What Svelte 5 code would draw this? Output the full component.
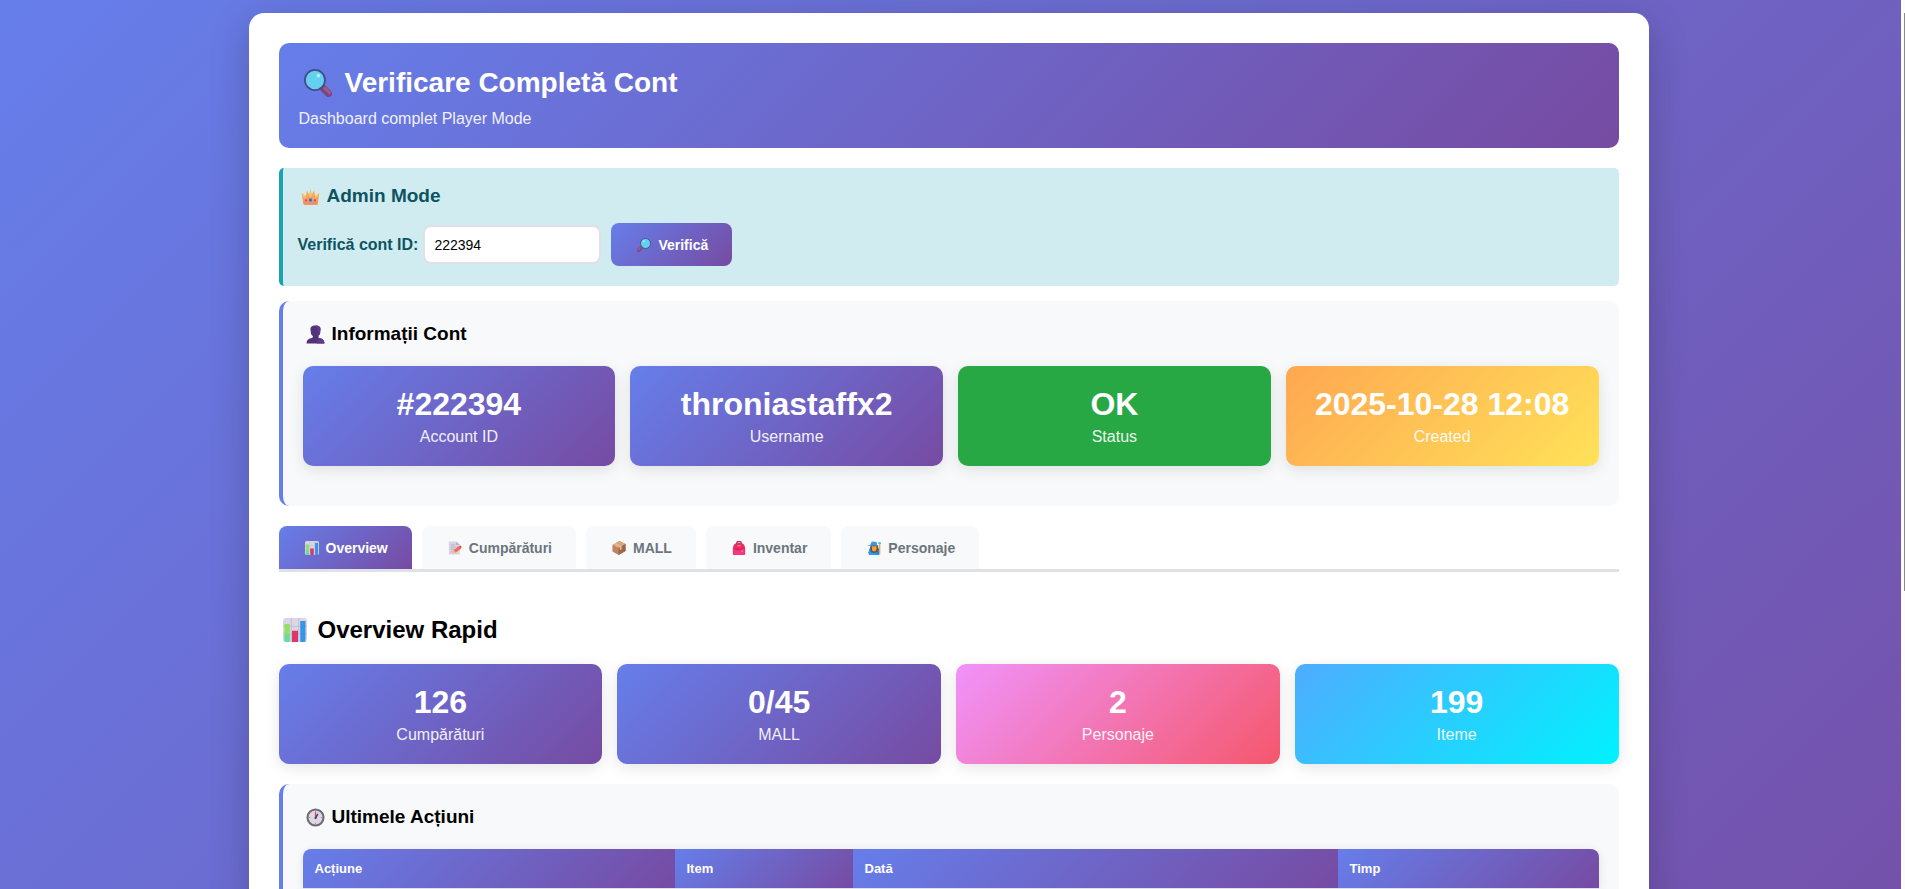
<script>
  let accountId = $state('222394');
  let active = $state('Overview');

  const account = [
    { value: '#222394', label: 'Account ID', tone: 'violet' },
    { value: 'throniastaffx2', label: 'Username', tone: 'violet' },
    { value: 'OK', label: 'Status', tone: 'green' },
    { value: '2025-10-28 12:08', label: 'Created', tone: 'amber' }
  ];
  const overview = [
    { value: '126', label: 'Cumpărături', tone: 'violet' },
    { value: '0/45', label: 'MALL', tone: 'violet' },
    { value: '2', label: 'Personaje', tone: 'pink' },
    { value: '199', label: 'Iteme', tone: 'cyan' }
  ];
  const tabs = [
    { name: 'Overview', icon: 'chart' },
    { name: 'Cumpărături', icon: 'memo' },
    { name: 'MALL', icon: 'box' },
    { name: 'Inventar', icon: 'bag' },
    { name: 'Personaje', icon: 'hero' }
  ];
</script>

{#snippet icon(name)}
  <svg class="icon" viewBox="0 0 32 32" aria-hidden="true">
    {#if name === 'lens'}
      <path d="M22 22l6 6" stroke="#7a4680" stroke-width="8" stroke-linecap="round" />
      <path d="M24 22l5 5" stroke="#9c5a86" stroke-width="4" stroke-linecap="round" />
      <circle cx="12.500" cy="12.500" r="11.500" fill="#62d0ee" stroke="#464a8a" stroke-width="2" />
      <circle cx="16.500" cy="7.500" r="2.200" fill="#b4ecfa" />
    {:else if name === 'crown'}
      <path d="M4 29L1 10l7 5 2-9 4 7 2-10 2 10 4-7 2 9 7-5-3 19z" fill="#f5ab5e" />
      <path d="M4 16h24l1 6-1 8H5L3 22z" fill="#f3a160" />
      <path d="M4 24h24l-1 6H5z" fill="#ee9166" />
      <path d="M3 13l5 5M29 13l-5 5M16 7v10" stroke="#ffc95f" stroke-width="2.500" />
      <circle cx="16" cy="22" r="3" fill="#2d75e8" />
      <circle cx="8.500" cy="22.500" r="1.900" fill="#e83a68" />
      <circle cx="23.500" cy="22.500" r="1.900" fill="#e83a68" />
    {:else if name === 'person'}
      <path d="M1 31c0-6 4-8 9-9 2-1 2-3 1-4C8 16 8 13 8 10 6 4 10 1 16 1s10 3 8 9c0 3 0 6-3 8-1 1-1 3 1 4 5 1 9 3 9 9z" fill="#533378" />
      <path d="M16 1c6 0 10 3 8 9 0 3 0 6-3 8-1 1-1 3 1 4 5 1 9 3 9 9H18c6-9 4-20-2-30z" fill="#5e3b87" />
    {:else if name === 'chart'}
      <rect x="0" y="0" width="32" height="32" rx="4" fill="#dcd6e4" />
      <path d="M0 11h32M0 21h32M11 0v32M21 0v32" stroke="#bdb5ca" />
      <path d="M2 8h7v24H4q-2 0-2-2z" fill="#8fe065" />
      <path d="M2 22h7v10H4q-2 0-2-2z" fill="#66dda0" />
      <rect x="12" y="17" width="8" height="15" fill="#e0346f" />
      <path d="M23 4h7v26q0 2-2 2h-5z" fill="#3396e8" />
    {:else if name === 'memo'}
      <path d="M2 1h17l8 8v22H2z" fill="#dbd3e3" />
      <path d="M19 1v8h8z" fill="#b9aec8" />
      <path d="M6 9h10M6 14h17M6 19h14M6 25h9" stroke="#a99fbb" stroke-width="1.500" />
      <path d="M11 28l2-7 12-9 5 5-12 9z" fill="#f06d45" />
      <path d="M25 12l3-2q3 1 3 5l-2 2z" fill="#dc4068" />
      <path d="M11 28l2-7 5 5z" fill="#f8c893" />
    {:else if name === 'box'}
      <path d="M1 9L17 0l14 7v16l-16 9L1 24z" fill="#bd8562" />
      <path d="M1 9L17 0l14 7-16 9z" fill="#d9a57c" />
      <path d="M15 16l16-9v16l-16 9z" fill="#9b6650" />
      <path d="M8 5l14 7v7l-4 2v-7L5 7z" fill="#e8bd8b" />
    {:else if name === 'bag'}
      <path d="M11 7V4q0-3 5-3t5 3v3" fill="none" stroke="#a62958" stroke-width="3" />
      <path d="M2 29V16Q3 4 16 4t14 12v13q0 3-3 3H5q-3 0-3-3z" fill="#e92a66" />
      <path d="M4 19h24v10q0 3-3 3H7q-3 0-3-3z" fill="#ff347f" />
      <path d="M7 20h18" stroke="#a72559" stroke-width="2" />
      <path d="M12 11h8M23 20v5" stroke="#f9b552" stroke-width="2" />
    {:else if name === 'hero'}
      <path d="M5 32V20l4-10h15l4 10v12z" fill="#237ed4" />
      <path d="M8 12q0-4 9-4t8 4v7q-2 8-8 8t-9-8z" fill="#704739" />
      <path d="M11 12h11v6q-1 6-6 6-4 0-5-6z" fill="#f2a13e" />
      <path d="M1 12q3-3 6-3l4-8 11 1 1 7 5 3q-13-4-27 0z" fill="#369ce9" />
      <path d="M2 24l9 2 5 2 6-2 5 6H5z" fill="#299be6" />
      <path d="M29 8v22" stroke="#f2a642" stroke-width="3" />
      <circle cx="29" cy="5" r="3" fill="#46bcef" />
    {:else if name === 'clock'}
      <circle cx="16" cy="16" r="13.500" fill="#dcd7e0" stroke="#706a76" stroke-width="3.500" />
      <path d="M16 5v2M16 25v2M5 16h2M25 16h2" stroke="#918998" stroke-width="1.500" />
      <path d="M16 17V7" stroke="#e5395d" stroke-width="2" />
      <path d="M16 17l4-7" stroke="#4d3974" stroke-width="2.500" />
      <circle cx="16" cy="17" r="1.800" fill="#4d3974" />
    {/if}
  </svg>
{/snippet}

{#snippet cards(items)}
  <div class="cards">
    {#each items as item}
      <div class="stat {item.tone}">
        <div class="value">{item.value}</div>
        <div class="label">{item.label}</div>
      </div>
    {/each}
  </div>
{/snippet}

<div class="page">
  <div class="view">
    <main class="container">
      <header class="hero violet">
        <h1>{@render icon('lens')}Verificare Completă Cont</h1>
        <p>Dashboard complet Player Mode</p>
      </header>

      <form class="admin" onsubmit={(e) => e.preventDefault()}>
        <h3>{@render icon('crown')}Admin Mode</h3>
        <div class="lookup">
          <label for="account">Verifică cont ID:</label>
          <input id="account" type="text" bind:value={accountId} />
          <button class="check violet" type="submit"><span class="flip">{@render icon('lens')}</span>Verifică</button>
        </div>
      </form>

      <section class="panel info">
        <h3>{@render icon('person')}Informații Cont</h3>
        {@render cards(account)}
      </section>

      <nav class="tabs">
        {#each tabs as tab}
          <button class="tab" class:violet={active === tab.name} onclick={() => (active = tab.name)}>
            {@render icon(tab.icon)}{tab.name}
          </button>
        {/each}
      </nav>

      <h2>{@render icon('chart')}Overview Rapid</h2>
      {@render cards(overview)}

      <section class="panel recent">
        <h3>{@render icon('clock')}Ultimele Acțiuni</h3>
        <table>
          <colgroup>
            <col class="c1" /><col class="c2" /><col class="c3" /><col class="c4" />
          </colgroup>
          <thead>
            <tr><th>Acțiune</th><th>Item</th><th>Dată</th><th>Timp</th></tr>
          </thead>
        </table>
      </section>
    </main>
  </div>
  <div class="scroll"><div class="thumb"></div></div>
</div>

<style>
  :global(body) {
    margin: 0;
    font-family: 'Liberation Sans', Arial, sans-serif;
    font-size: 16px;
    line-height: 18px;
    color: #000;
  }
  * {
    box-sizing: border-box;
  }
  h1, h2, h3, p {
    margin: 0;
  }
  .page {
    display: flex;
    height: 100vh;
    overflow: hidden;
  }
  .view {
    flex: 1;
    min-width: 0;
    padding: 13px 4px 0 0;
    background: linear-gradient(135deg, #667eea 0%, #764ba2 100%) 0 0 / 100% 148vh no-repeat;
    overflow: hidden;
  }
  .scroll {
    width: 4px;
    padding: 13px 0 0 3px;
    background: #fcfcfc;
  }
  .thumb {
    height: 66%;
    background: #8b8b8b;
  }
  .container {
    max-width: 1400px;
    min-height: 145vh;
    margin: 0 auto;
    padding: 30px;
    background: #fff;
    border-radius: 15px;
    box-shadow: 0 10px 40px rgba(0, 0, 0, 0.2);
  }
  .icon {
    flex: none;
    width: 19px;
    height: 19px;
    fill: none;
  }
  .violet {
    background: linear-gradient(135deg, #667eea 0%, #764ba2 100%);
  }
  .green {
    background: #28a745;
  }
  .amber {
    background: linear-gradient(135deg, #ffa751 0%, #ffe259 100%);
  }
  .pink {
    background: linear-gradient(135deg, #f093fb 0%, #f5576c 100%);
  }
  .cyan {
    background: linear-gradient(135deg, #4facfe 0%, #00f2fe 100%);
  }
  .hero {
    padding: 20px;
    margin-bottom: 20px;
    border-radius: 10px;
    color: #fff;
  }
  h1 {
    display: flex;
    align-items: center;
    gap: 13px;
    padding-left: 5px;
    margin-bottom: 7px;
    font-size: 28px;
    line-height: 40px;
  }
  h1 .icon {
    width: 28px;
    height: 28px;
  }
  .hero p {
    opacity: 0.9;
  }
  h2 {
    display: flex;
    align-items: center;
    gap: 11px;
    padding-left: 4px;
    margin: 43px 0 19px;
    font-size: 24px;
    line-height: 30px;
  }
  h2 .icon {
    width: 24px;
    height: 24px;
  }
  h3 {
    display: flex;
    align-items: center;
    gap: 7px;
    padding-left: 3px;
    font-size: 19px;
    line-height: 26px;
  }
  .admin {
    padding: 15px;
    margin-bottom: 15px;
    border-left: 4px solid #17a2b8;
    border-radius: 5px;
    background: #d1ecf1;
    color: #0c5460;
  }
  .lookup {
    display: flex;
    align-items: center;
    padding: 14px 0 5px;
    font-weight: bold;
  }
  input {
    width: 178px;
    height: 39px;
    margin: 0 10px 0 5px;
    padding: 0 9px;
    border: 2px solid #e0e0e8;
    border-radius: 8px;
    background: #fff;
    color: #000;
    font: 14px 'Liberation Sans', Arial, sans-serif;
  }
  button {
    display: flex;
    align-items: center;
    border: 0;
    font: bold 14px 'Liberation Sans', Arial, sans-serif;
    cursor: pointer;
  }
  button .icon {
    display: block;
    width: 14px;
    height: 14px;
  }
  .check {
    height: 43px;
    gap: 7px;
    padding: 0 24px 0 26px;
    border-radius: 8px;
    color: #fff;
  }
  .flip {
    transform: scaleX(-1);
  }
  .panel {
    padding: 20px;
    margin-bottom: 20px;
    border-left: 4px solid #667eea;
    border-radius: 10px;
    background: #f8f9fa;
  }
  .panel h3 {
    margin-bottom: 19px;
  }
  .info {
    padding-bottom: 40px;
  }
  .cards {
    display: grid;
    grid-template-columns: repeat(4, minmax(0, 1fr));
    gap: 15px;
  }
  .stat {
    padding: 20px;
    border-radius: 10px;
    box-shadow: 0 4px 15px rgba(0, 0, 0, 0.1);
    color: #fff;
    text-align: center;
  }
  .value {
    margin-bottom: 5px;
    font-size: 32px;
    font-weight: bold;
    line-height: 37px;
    white-space: nowrap;
  }
  .label {
    opacity: 0.9;
  }
  .tabs {
    display: flex;
    gap: 10px;
    border-bottom: 3px solid #dee2e6;
  }
  .tab {
    height: 43px;
    gap: 7px;
    padding: 0 24px 0 26px;
    border-radius: 8px 8px 0 0;
    background: #f8f9fa;
    color: #6c757d;
  }
  .tab.violet {
    background: linear-gradient(135deg, #667eea 0%, #764ba2 100%);
    color: #fff;
  }
  .recent {
    margin-top: 20px;
  }
  table {
    width: 100%;
    table-layout: fixed;
    border-collapse: collapse;
    border-radius: 8px 8px 0 0;
    overflow: hidden;
    box-shadow: 0 2px 10px rgba(0, 0, 0, 0.1);
  }
  .c1 {
    width: 372px;
  }
  .c2 {
    width: 178px;
  }
  .c3 {
    width: 485px;
  }
  .c4 {
    width: 261px;
  }
  th {
    padding: 12px;
    border-bottom: 1px solid #dee2e6;
    background: linear-gradient(135deg, #667eea 0%, #764ba2 100%);
    color: #fff;
    font-size: 13px;
    line-height: 15px;
    text-align: left;
  }
</style>
